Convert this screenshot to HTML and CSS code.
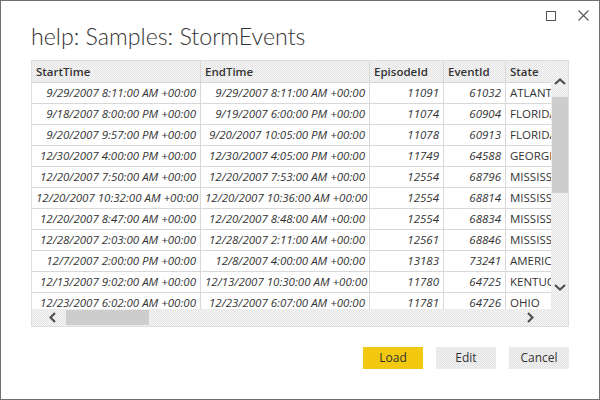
FILE: index.html
```html
<!DOCTYPE html>
<html>
<head>
<meta charset="utf-8">
<link rel="stylesheet" href="styles.css">
</head>
<body>
<div class="window">
  <div class="titlebar">
    <svg class="ctl" width="10" height="10" viewBox="0 0 10 10"><rect x="0.5" y="0.5" width="9" height="9" fill="none" stroke="#555" stroke-width="1"/></svg>
    <svg class="ctl" width="11" height="11" viewBox="0 0 11 11"><path d="M0.5 0.5 L10.5 10.5 M10.5 0.5 L0.5 10.5" stroke="#555" stroke-width="1.1" fill="none"/></svg>
  </div>
  <div class="title">help: Samples: StormEvents</div>
  <div class="grid">
    <div class="viewport">
      <div class="row head">
        <div class="c">StartTime</div><div class="c">EndTime</div><div class="c">EpisodeId</div><div class="c">EventId</div><div class="c">State</div>
      </div>
      <div class="row"><div class="c n">9/29/2007 8:11:00 AM +00:00</div><div class="c n">9/29/2007 8:11:00 AM +00:00</div><div class="c n">11091</div><div class="c n">61032</div><div class="c">ATLANTIC SOUTH</div></div>
      <div class="row"><div class="c n">9/18/2007 8:00:00 PM +00:00</div><div class="c n">9/19/2007 6:00:00 PM +00:00</div><div class="c n">11074</div><div class="c n">60904</div><div class="c">FLORIDA</div></div>
      <div class="row"><div class="c n">9/20/2007 9:57:00 PM +00:00</div><div class="c n">9/20/2007 10:05:00 PM +00:00</div><div class="c n">11078</div><div class="c n">60913</div><div class="c">FLORIDA</div></div>
      <div class="row"><div class="c n">12/30/2007 4:00:00 PM +00:00</div><div class="c n">12/30/2007 4:05:00 PM +00:00</div><div class="c n">11749</div><div class="c n">64588</div><div class="c">GEORGIA</div></div>
      <div class="row"><div class="c n">12/20/2007 7:50:00 AM +00:00</div><div class="c n">12/20/2007 7:53:00 AM +00:00</div><div class="c n">12554</div><div class="c n">68796</div><div class="c">MISSISSIPPI</div></div>
      <div class="row"><div class="c n">12/20/2007 10:32:00 AM +00:00</div><div class="c n">12/20/2007 10:36:00 AM +00:00</div><div class="c n">12554</div><div class="c n">68814</div><div class="c">MISSISSIPPI</div></div>
      <div class="row"><div class="c n">12/20/2007 8:47:00 AM +00:00</div><div class="c n">12/20/2007 8:48:00 AM +00:00</div><div class="c n">12554</div><div class="c n">68834</div><div class="c">MISSISSIPPI</div></div>
      <div class="row"><div class="c n">12/28/2007 2:03:00 AM +00:00</div><div class="c n">12/28/2007 2:11:00 AM +00:00</div><div class="c n">12561</div><div class="c n">68846</div><div class="c">MISSISSIPPI</div></div>
      <div class="row"><div class="c n">12/7/2007 2:00:00 PM +00:00</div><div class="c n">12/8/2007 4:00:00 AM +00:00</div><div class="c n">13183</div><div class="c n">73241</div><div class="c">AMERICAN SAMOA</div></div>
      <div class="row"><div class="c n">12/13/2007 9:02:00 AM +00:00</div><div class="c n">12/13/2007 10:30:00 AM +00:00</div><div class="c n">11780</div><div class="c n">64725</div><div class="c">KENTUCKY</div></div>
      <div class="row"><div class="c n">12/23/2007 6:02:00 AM +00:00</div><div class="c n">12/23/2007 6:07:00 AM +00:00</div><div class="c n">11781</div><div class="c n">64726</div><div class="c">OHIO</div></div>
    </div>
    <div class="vscroll">
      <svg class="arr-up" width="12" height="7" viewBox="0 0 12 7"><polyline points="1,6 6,1.5 11,6" fill="none" stroke="#505050" stroke-width="2.2"/></svg>
      <div class="vthumb"></div>
      <svg class="arr-down" width="12" height="7" viewBox="0 0 12 7"><polyline points="1,1 6,5.5 11,1" fill="none" stroke="#505050" stroke-width="2.2"/></svg>
    </div>
    <div class="hscroll">
      <svg class="arr-left" width="7" height="11" viewBox="0 0 7 11"><polyline points="6,1 1.5,5.5 6,10" fill="none" stroke="#505050" stroke-width="2.2"/></svg>
      <div class="hthumb"></div>
      <svg class="arr-right" width="7" height="11" viewBox="0 0 7 11"><polyline points="1,1 5.5,5.5 1,10" fill="none" stroke="#505050" stroke-width="2.2"/></svg>
    </div>
  </div>
  <div class="buttons">
    <div class="btn primary">Load</div>
    <div class="btn">Edit</div>
    <div class="btn">Cancel</div>
  </div>
</div>
</body>
</html>
```
FILE: styles.css
```css
html, body {
  margin: 0;
  padding: 0;
  background: #ffffff;
}
.window {
  width: 600px;
  height: 400px;
  box-sizing: border-box;
  border: 1px solid #6f6f6f;
  background: #ffffff;
  font-family: "Segoe UI", "Open Sans", "Noto Sans", sans-serif;
  color: #333333;
  display: flex;
  flex-direction: column;
}
.titlebar {
  display: flex;
  justify-content: flex-end;
  align-items: center;
  gap: 22px;
  height: 11px;
  padding: 9px 10px 0 0;
}
.ctl {
  display: block;
}
.title {
  margin-left: 30px;
  font-family: "Lato", "Open Sans", sans-serif;
  font-size: 23.2px;
  font-weight: 300;
  line-height: 30px;
  height: 30px;
  color: #333;
  white-space: nowrap;
}
.row.head, .vscroll, .hscroll {
  background: repeating-conic-gradient(#e4e4e4 0 25%, #f6f6f6 0 50%) 0 0 / 2px 2px;
}
.grid {
  margin: 9px 30px 0 30px;
  border: 1px solid #dedede;
  display: grid;
  grid-template-columns: 519px 17px;
  grid-template-rows: 248px 17px;
}
.viewport {
  overflow: hidden;
  grid-column: 1;
  grid-row: 1;
}
.row {
  display: grid;
  grid-template-columns: 169px 169px 74px 62px 140px;
  height: 21px;
  width: 614px;
}
.row.head {
  height: 22px;
  font-weight: 600;
  font-style: normal;
}
.c {
  box-sizing: border-box;
  border-right: 1px solid #d8d8d8;
  border-bottom: 1px solid #d8d8d8;
  padding: 0 4px;
  font-size: 11.5px;
  line-height: 20px;
  white-space: nowrap;
  overflow: hidden;
}
.row.head .c {
  line-height: 21px;
  font-size: 11.5px;
}
.c.n {
  text-align: right;
  font-style: italic;
}
.vscroll {
  grid-column: 2;
  grid-row: 1 / 3;
  display: flex;
  flex-direction: column;
  align-items: center;
}
.arr-up {
  display: block;
  margin-top: 17px;
}
.vthumb {
  margin-top: 12px;
  width: 16px;
  height: 96px;
  background: #cdcdcd;
  align-self: flex-end;
}
.arr-down {
  display: block;
  margin-top: auto;
  margin-bottom: 35px;
}
.hscroll {
  grid-column: 1;
  grid-row: 2;
  display: flex;
  align-items: center;
  padding: 0 17px;
}
.arr-left, .arr-right {
  display: block;
}
.hthumb {
  margin-left: 10px;
  width: 83px;
  height: 15px;
  background: #cdcdcd;
}
.arr-right {
  margin-left: auto;
}
.buttons {
  display: flex;
  justify-content: flex-end;
  gap: 13px;
  margin-top: 20px;
  padding-right: 30px;
}
.btn {
  width: 60px;
  height: 22px;
  line-height: 22px;
  text-align: center;
  font-size: 12px;
  color: #333;
  background: repeating-conic-gradient(#e2e2e2 0 25%, #f2f2f2 0 50%) 0 0 / 2px 2px;
}
.btn.primary {
  background: #f2c811;
}
```
